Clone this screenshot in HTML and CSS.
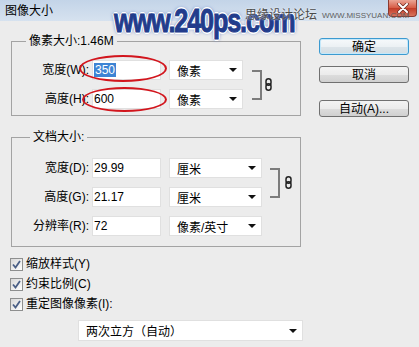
FILE: index.html
```html
<!DOCTYPE html>
<html lang="zh-CN">
<head>
  <meta charset="UTF-8">
  <title>图像大小</title>
  <link rel="stylesheet" href="styles.css">
</head>
<body>
  <div class="window">
    <div class="titlebar">
      <span class="title">图像大小</span>
      <span class="close">
        <svg width="12" height="10" viewBox="0 0 12 10">
          <path d="M2 1 L10 9 M10 1 L2 9" stroke="#6b2a20" stroke-width="3.4" stroke-linecap="round"/>
          <path d="M2 1 L10 9 M10 1 L2 9" stroke="#fff" stroke-width="2" stroke-linecap="round"/>
        </svg>
      </span>
    </div>

    <div class="dialog">
      <div class="main">
        <fieldset class="group">
          <legend>像素大小:1.46M</legend>
          <div class="linked">
            <div class="rows">
              <div class="row">
                <span class="label">宽度(W):</span>
                <span class="field"><span class="sel">350</span></span>
                <span class="combo">像素<i class="arrow"></i></span>
              </div>
              <div class="row">
                <span class="label">高度(H):</span>
                <span class="field">600</span>
                <span class="combo">像素<i class="arrow"></i></span>
              </div>
            </div>
            <span class="bracket"></span>
            <svg class="chain" width="7" height="13" viewBox="0 0 7 13">
              <rect x="1" y="0.8" width="5" height="6.4" rx="2.5" fill="none" stroke="#222" stroke-width="1.5"/>
              <rect x="1" y="5.8" width="5" height="6.4" rx="2.5" fill="none" stroke="#222" stroke-width="1.5"/>
            </svg>
          </div>
        </fieldset>

        <fieldset class="group group-doc">
          <legend>文档大小:</legend>
          <div class="linked">
            <div class="rows">
              <div class="row">
                <span class="label">宽度(D):</span>
                <span class="field">29.99</span>
                <span class="combo combo-wide">厘米<i class="arrow"></i></span>
              </div>
              <div class="row">
                <span class="label">高度(G):</span>
                <span class="field">21.17</span>
                <span class="combo combo-wide">厘米<i class="arrow"></i></span>
              </div>
            </div>
            <span class="bracket"></span>
            <svg class="chain" width="7" height="13" viewBox="0 0 7 13">
              <rect x="1" y="0.8" width="5" height="6.4" rx="2.5" fill="none" stroke="#222" stroke-width="1.5"/>
              <rect x="1" y="5.8" width="5" height="6.4" rx="2.5" fill="none" stroke="#222" stroke-width="1.5"/>
            </svg>
          </div>
          <div class="row row-res">
            <span class="label">分辨率(R):</span>
            <span class="field">72</span>
            <span class="combo combo-wide">像素/英寸<i class="arrow"></i></span>
          </div>
        </fieldset>

        <div class="checks">
          <div class="check"><span class="box"><svg width="9" height="9" viewBox="0 0 9 9"><path d="M1 4.5 L3.5 7.5 L8 1" fill="none" stroke="#4a5f86" stroke-width="1.8"/></svg></span>缩放样式(Y)</div>
          <div class="check"><span class="box"><svg width="9" height="9" viewBox="0 0 9 9"><path d="M1 4.5 L3.5 7.5 L8 1" fill="none" stroke="#4a5f86" stroke-width="1.8"/></svg></span>约束比例(C)</div>
          <div class="check"><span class="box"><svg width="9" height="9" viewBox="0 0 9 9"><path d="M1 4.5 L3.5 7.5 L8 1" fill="none" stroke="#4a5f86" stroke-width="1.8"/></svg></span>重定图像像素(I):</div>
        </div>

        <div class="combo resample">两次立方（自动）<i class="arrow"></i></div>
      </div>

      <div class="buttons">
        <button class="btn btn-default">确定</button>
        <button class="btn">取消</button>
        <button class="btn btn-auto">自动(A)...</button>
      </div>
    </div>

    <!-- watermark and annotation marks lie over the dialog -->
    <div class="wm-site">www.240ps.com</div>
    <div class="wm-forum">思缘设计论坛</div>
    <div class="wm-url">WWW.MISSYUAN.COM</div>
    <span class="ring ring-w"></span>
    <span class="ring ring-h"></span>
  </div>
</body>
</html>
```

FILE: styles.css
```css
* {
  box-sizing: border-box;
}
body {
  margin: 0;
  width: 419px;
  height: 347px;
  overflow: hidden;
  background: #ececec;
  font-family: "Liberation Sans", "Noto Sans CJK SC", sans-serif;
  font-size: 12px;
  color: #000;
}
.window {
  position: relative;
  height: 347px;
}
.titlebar {
  display: flex;
  align-items: center;
  height: 21px;
  padding-left: 5px;
  background: linear-gradient(#c3d4e8, #d6e2ef);
}
.title {
  line-height: 14px;
}
.close {
  margin-left: auto;
  margin-right: 2px;
  align-self: flex-start;
  width: 29px;
  height: 17px;
  border: 1px solid #8b3a2f;
  border-top: none;
  border-radius: 0 0 4px 4px;
  background: linear-gradient(#eba595, #d65a43 50%, #c23b27 51%, #d9735c);
  display: flex;
  align-items: center;
  justify-content: center;
}
.dialog {
  display: flex;
  padding: 12px 0 0 11px;
}
.main {
  width: 290px;
}
.group {
  margin: 0;
  padding: 11px 0 6px;
  min-width: 0;
  border: 1px solid #a3a3a3;
}
.group legend {
  padding: 0 3px;
  margin-left: 14px;
  line-height: 16px;
}
.group-doc {
  margin-top: 13px;
  padding: 13px 0 10px;
}
.group-doc legend {
  margin-left: 18px;
}
.linked {
  display: flex;
  align-items: center;
}
.rows {
  display: flex;
  flex-direction: column;
  gap: 9px;
}
.row {
  display: flex;
  align-items: center;
  height: 20px;
}
.row-res {
  margin-top: 9px;
}
.label {
  width: 77px;
  text-align: right;
  line-height: 14px;
}
.field {
  display: flex;
  align-items: center;
  width: 69px;
  height: 20px;
  margin-left: 3px;
  padding-left: 1px;
  background: #fff;
  border: 1px solid #e0e0e0;
}
.sel {
  background: #3d84d4;
  color: #fff;
  padding: 0 1px;
  line-height: 14px;
}
.combo {
  display: flex;
  align-items: center;
  width: 74px;
  height: 20px;
  margin-left: 8px;
  padding-left: 7px;
  background: #fff;
  border: 1px solid #e0e0e0;
}
.combo-wide {
  width: 93px;
}
.arrow {
  margin-left: auto;
  margin-right: 5px;
  width: 0;
  height: 0;
  border-left: 4px solid transparent;
  border-right: 4px solid transparent;
  border-top: 4px solid #111;
}
.bracket {
  width: 10px;
  height: 30px;
  margin-left: 9px;
  border: 2px solid #7c7c7c;
  border-left: none;
}
.chain {
  margin-left: 3px;
}
.group-doc .bracket {
  margin-left: 8px;
}
.group-doc .chain {
  margin-left: 5px;
}
.checks {
  margin-top: 7px;
  margin-left: -1px;
}
.check {
  display: flex;
  align-items: center;
  height: 20px;
  line-height: 14px;
}
.box {
  display: flex;
  align-items: center;
  justify-content: center;
  width: 13px;
  height: 13px;
  margin-right: 3px;
  border: 1px solid #8e8f8f;
  background: linear-gradient(135deg, #d8d8d8, #ffffff);
}
.resample {
  width: 225px;
  height: 21px;
  margin-top: 6px;
  margin-left: 67px;
}
.buttons {
  display: flex;
  flex-direction: column;
  margin-left: 18px;
  padding-top: 5px;
}
.btn {
  width: 90px;
  height: 17px;
  margin: 0;
  padding: 0;
  border: 1px solid #707070;
  border-radius: 3px;
  background: linear-gradient(#f3f3f3, #ebebeb 50%, #dddddd 51%, #d0d0d0);
  font: inherit;
  line-height: 14px;
  color: #000;
}
.btn + .btn {
  margin-top: 11px;
}
.buttons .btn-auto {
  margin-top: 17px;
}
.btn-default {
  border-color: #3c9ad0;
  box-shadow: inset 0 0 0 1px #c4e8fa;
  background: linear-gradient(#f6f9fb, #ecf1f4 50%, #dde5ea 51%, #d3dde3);
}
.wm-site {
  position: absolute;
  left: 114px;
  top: 3px;
  font-family: "Liberation Sans", sans-serif;
  font-weight: bold;
  font-size: 34px;
  line-height: 34px;
  letter-spacing: -1.5px;
  color: #223c8c;
  transform: scaleX(0.74);
  transform-origin: left top;
  -webkit-text-stroke: 1px #223c8c;
  text-shadow:
    1px 0 #fff, -1px 0 #fff, 0 1px #fff, 0 -1px #fff,
    1px 1px #fff, -1px -1px #fff, 1px -1px #fff, -1px 1px #fff,
    2px 0 #fff, -2px 0 #fff, 0 2px #fff, 0 -2px #fff,
    0 0 4px #5f7fc4, 0 0 5px #5f7fc4;
}
.wm-forum {
  position: absolute;
  left: 245px;
  top: 7px;
  font-family: "Noto Sans CJK SC", sans-serif;
  font-size: 12px;
  line-height: 14px;
  color: #4a4a4a;
  text-shadow: 0 0 2px #fff;
}
.wm-url {
  position: absolute;
  left: 322px;
  top: 12px;
  font-size: 8px;
  line-height: 8px;
  color: #606060;
}
.ring {
  position: absolute;
  border: 2px solid #d2151d;
  border-radius: 50%;
}
.ring-w {
  left: 79px;
  top: 55px;
  width: 88px;
  height: 27px;
}
.ring-h {
  left: 82px;
  top: 87px;
  width: 85px;
  height: 25px;
}
```
